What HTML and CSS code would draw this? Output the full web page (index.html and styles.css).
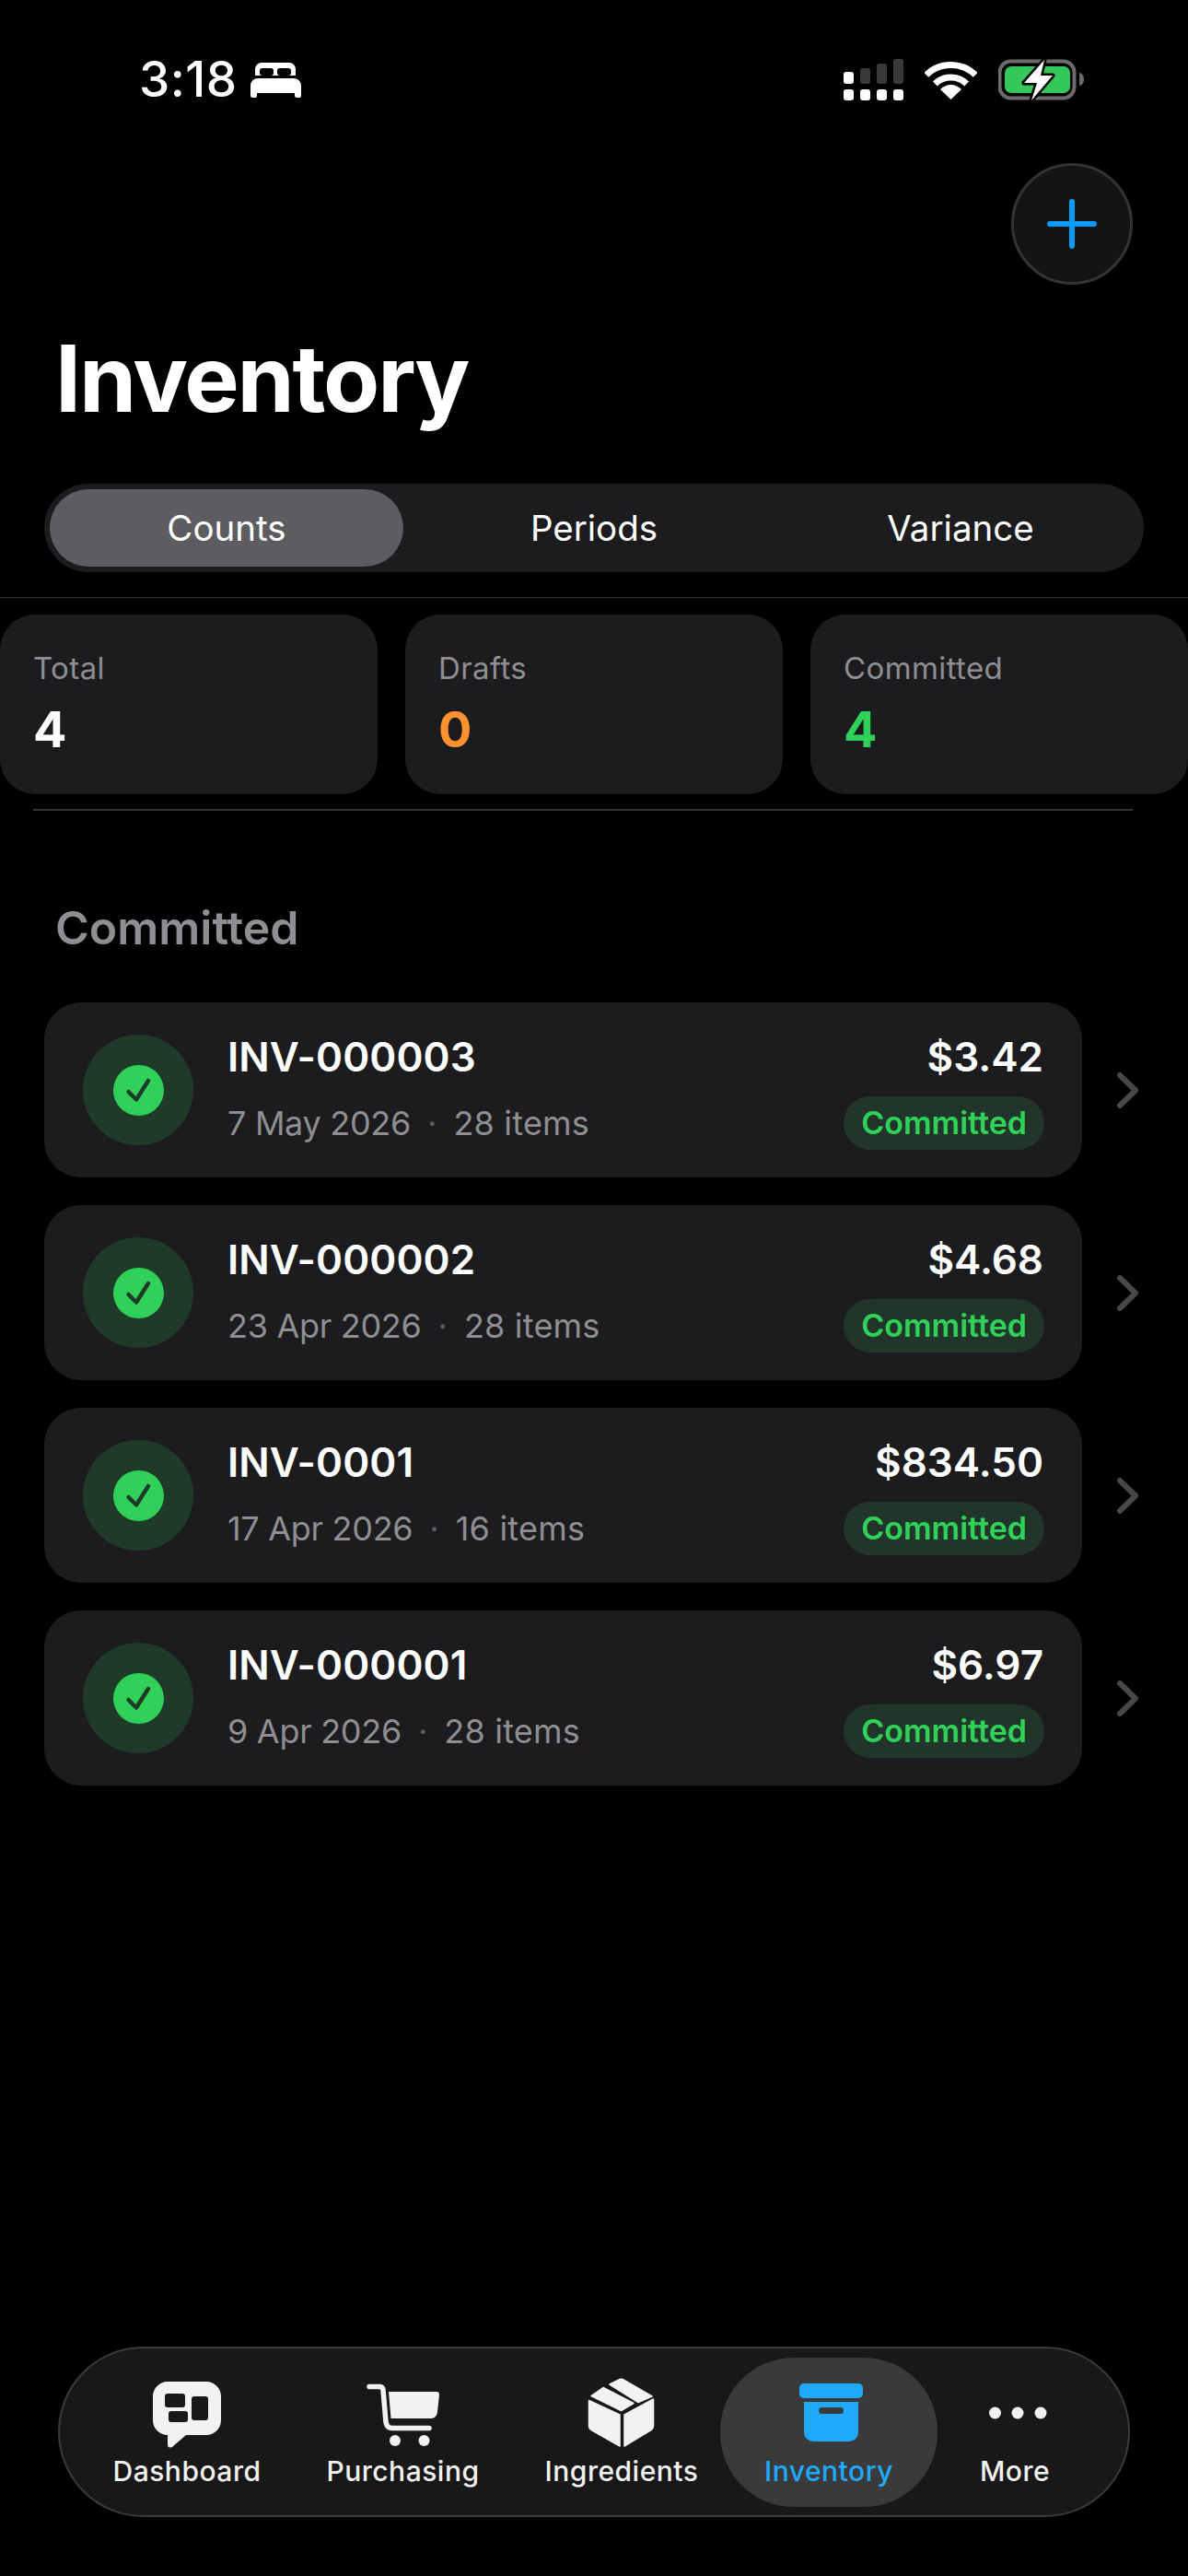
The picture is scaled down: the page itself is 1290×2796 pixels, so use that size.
FILE: index.html
```html
<!DOCTYPE html>
<html lang="en">
<head>
  <meta charset="UTF-8" />
  <meta name="viewport" content="width=device-width, initial-scale=1.0" />
  <title>Inventory</title>
  <link rel="stylesheet" href="styles.css">
</head>
<body>
  <div class="status-bar">
    <div class="status-left">
      <span class="time">3:18</span>
      <svg class="bed" width="55" height="38" viewBox="0 0 55 38">
        <path fill="#fff" d="M5 14V7a7 7 0 0 1 7-7h30a7 7 0 0 1 7 7v7z"/>
        <rect x="10" y="6" width="15" height="8" rx="3" fill="#000"/>
        <rect x="29" y="6" width="15" height="8" rx="3" fill="#000"/>
        <path fill="#fff" d="M0 25a8 8 0 0 1 8-8h39a8 8 0 0 1 8 8v11a2 2 0 0 1-2 2h-3a2 2 0 0 1-2-2v-3H7v3a2 2 0 0 1-2 2H2a2 2 0 0 1-2-2z"/>
      </svg>
    </div>
    <div class="status-right">
      <svg width="65" height="45" viewBox="0 0 65 45">
        <rect x="0" y="14" width="11" height="13" rx="3" fill="#fff"/>
        <rect x="18" y="10" width="11" height="17" rx="3" fill="#3a3a3a"/>
        <rect x="36" y="5" width="11" height="22" rx="3" fill="#3a3a3a"/>
        <rect x="54" y="0" width="11" height="27" rx="3" fill="#3a3a3a"/>
        <rect x="0" y="33" width="11" height="12" rx="3" fill="#fff"/>
        <rect x="18" y="33" width="11" height="12" rx="3" fill="#fff"/>
        <rect x="36" y="33" width="11" height="12" rx="3" fill="#fff"/>
        <rect x="54" y="33" width="11" height="12" rx="3" fill="#fff"/>
      </svg>
      <svg class="wifi" width="57" height="42" viewBox="0 0 57 42">
        <path d="M1.8 15.3A38.5 38.5 0 0 1 55.2 15.3" fill="none" stroke="#fff" stroke-width="7"/>
        <path d="M11.4 24.9A24.5 24.5 0 0 1 45.6 24.9" fill="none" stroke="#fff" stroke-width="7"/>
        <path d="M28.5 42L17 31A16 16 0 0 1 40 31z" fill="#fff"/>
      </svg>
      <svg class="battery" width="93" height="46" viewBox="0 0 93 46">
        <rect x="1.5" y="2.5" width="81" height="40" rx="12" fill="none" stroke="#6b6b6b" stroke-width="4"/>
        <rect x="7" y="8" width="71" height="29" rx="7" fill="#34c759"/>
        <path d="M88 15a5 7 0 0 1 5 7a5 7 0 0 1-5 7z" fill="#6b6b6b"/>
        <path d="M50 1L28 26H42L36 45L59 18H46z" fill="#fff" stroke="#000" stroke-width="5" stroke-linejoin="round" paint-order="stroke"/>
      </svg>
    </div>
  </div>

  <div class="top-actions">
    <button class="add-btn" type="button">
      <svg width="54" height="54" viewBox="0 0 54 54"><path d="M27 3V51M3 27H51" stroke="#0a9bff" stroke-width="6" stroke-linecap="round"/></svg>
    </button>
  </div>

  <h1 class="page-title">Inventory</h1>

  <div class="segments">
    <div class="segment active"><span>Counts</span></div>
    <div class="segment"><span>Periods</span></div>
    <div class="segment"><span>Variance</span></div>
  </div>

  <div class="rule"></div>

  <div class="stats">
    <div class="stat-card">
      <div class="stat-label">Total</div>
      <div class="stat-value">4</div>
    </div>
    <div class="stat-card">
      <div class="stat-label">Drafts</div>
      <div class="stat-value orange">0</div>
    </div>
    <div class="stat-card">
      <div class="stat-label">Committed</div>
      <div class="stat-value green">4</div>
    </div>
  </div>

  <div class="rule-short"></div>

  <h2 class="section-title">Committed</h2>

  <div class="count-list">
    <div class="count-row">
      <div class="count-card">
        <div class="status-icon"><span class="status-dot"><svg width="30" height="30" viewBox="0 0 30 30"><path d="M4.500 17L13 25.500L26 5" class="check"/></svg></span></div>
        <div class="count-info">
          <div class="count-name">INV-000003</div>
          <div class="count-meta"><span class="date">7 May 2026</span><span class="sep">·</span><span class="items">28 items</span></div>
        </div>
        <div class="count-side">
          <div class="count-amount">$3.42</div>
          <div class="pill">Committed</div>
        </div>
      </div>
      <svg class="chevron" width="25" height="39" viewBox="0 0 25 39"><path d="M4 3L21 19.500L4 36"/></svg>
    </div>

    <div class="count-row">
      <div class="count-card">
        <div class="status-icon"><span class="status-dot"><svg width="30" height="30" viewBox="0 0 30 30"><path d="M4.500 17L13 25.500L26 5" class="check"/></svg></span></div>
        <div class="count-info">
          <div class="count-name">INV-000002</div>
          <div class="count-meta"><span class="date">23 Apr 2026</span><span class="sep">·</span><span class="items">28 items</span></div>
        </div>
        <div class="count-side">
          <div class="count-amount">$4.68</div>
          <div class="pill">Committed</div>
        </div>
      </div>
      <svg class="chevron" width="25" height="39" viewBox="0 0 25 39"><path d="M4 3L21 19.500L4 36"/></svg>
    </div>

    <div class="count-row">
      <div class="count-card">
        <div class="status-icon"><span class="status-dot"><svg width="30" height="30" viewBox="0 0 30 30"><path d="M4.500 17L13 25.500L26 5" class="check"/></svg></span></div>
        <div class="count-info">
          <div class="count-name">INV-0001</div>
          <div class="count-meta"><span class="date">17 Apr 2026</span><span class="sep">·</span><span class="items">16 items</span></div>
        </div>
        <div class="count-side">
          <div class="count-amount">$834.50</div>
          <div class="pill">Committed</div>
        </div>
      </div>
      <svg class="chevron" width="25" height="39" viewBox="0 0 25 39"><path d="M4 3L21 19.500L4 36"/></svg>
    </div>

    <div class="count-row">
      <div class="count-card">
        <div class="status-icon"><span class="status-dot"><svg width="30" height="30" viewBox="0 0 30 30"><path d="M4.500 17L13 25.500L26 5" class="check"/></svg></span></div>
        <div class="count-info">
          <div class="count-name">INV-000001</div>
          <div class="count-meta"><span class="date">9 Apr 2026</span><span class="sep">·</span><span class="items">28 items</span></div>
        </div>
        <div class="count-side">
          <div class="count-amount">$6.97</div>
          <div class="pill">Committed</div>
        </div>
      </div>
      <svg class="chevron" width="25" height="39" viewBox="0 0 25 39"><path d="M4 3L21 19.500L4 36"/></svg>
    </div>
  </div>

  <nav class="tab-bar">
    <div class="tab tab-dashboard">
      <svg width="80" height="80" viewBox="0 0 80 80">
        <path fill="#f2f2f2" d="M19 5H61A16 16 0 0 1 77 21V47A16 16 0 0 1 61 63H39L24 76Q19 78 19 73V63A16 16 0 0 1 3 47V21A16 16 0 0 1 19 5z"/>
        <rect x="16" y="18" width="22" height="15" rx="3" fill="#181818"/>
        <rect x="20" y="37" width="21" height="12" rx="3" fill="#181818"/>
        <rect x="45" y="21" width="18" height="26" rx="3" fill="#181818"/>
      </svg>
      <span>Dashboard</span>
    </div>
    <div class="tab tab-purchasing">
      <svg width="80" height="80" viewBox="0 0 80 80">
        <path fill="none" stroke="#f2f2f2" stroke-width="5.500" stroke-linecap="round" stroke-linejoin="round" d="M3 10.500H14Q17.500 10.500 18 14L21 49Q22 55.500 28 55.500H68"/>
        <path fill="#f2f2f2" d="M24 16H76Q79 16 79 19L77 38Q76 45 70 45H26.500z"/>
        <circle cx="31" cy="69" r="6" fill="#f2f2f2"/>
        <circle cx="62.500" cy="69" r="6" fill="#f2f2f2"/>
      </svg>
      <span>Purchasing</span>
    </div>
    <div class="tab tab-ingredients">
      <svg width="80" height="80" viewBox="0 0 80 80">
        <g fill="#f2f2f2" stroke="#f2f2f2" stroke-width="1.500" stroke-linejoin="round">
          <path d="M27 8L38 2.500Q40 2 41 2.500L73 21L58 27.500z"/>
          <path d="M20 11.500L53 28.500L39.500 36.500L7 20.500z"/>
          <path d="M4.500 25.500L38 41V75L8 58Q4.500 56 4.500 53z"/>
          <path d="M43 41L74.500 24V53Q74.500 56 72 57.500L43 75z"/>
        </g>
      </svg>
      <span>Ingredients</span>
    </div>
    <div class="tab tab-inventory">
      <svg width="80" height="80" viewBox="0 0 80 80">
        <rect x="8" y="7" width="69" height="16" rx="5" fill="#1eaaff"/>
        <path fill="#1eaaff" d="M13 27H72V60A10 10 0 0 1 62 70H23A10 10 0 0 1 13 60z"/>
        <rect x="29" y="33" width="27" height="7" rx="3.500" fill="#3a3a3a"/>
      </svg>
      <span>Inventory</span>
    </div>
    <div class="tab tab-more">
      <svg width="80" height="80" viewBox="0 0 80 80">
        <circle cx="18.500" cy="39" r="6.500" fill="#f2f2f2"/>
        <circle cx="43" cy="39" r="6.500" fill="#f2f2f2"/>
        <circle cx="68" cy="39" r="6.500" fill="#f2f2f2"/>
      </svg>
      <span>More</span>
    </div>
  </nav>
</body>
</html>
```

FILE: styles.css
```css
* { box-sizing: border-box; }
body { margin: 0; width: 1290px; height: 2796px; position: relative; overflow: hidden; background: #000; color: #fff; font-family: Inter, "Noto Sans", sans-serif; }
svg { display: block; }

/* status bar */
.status-bar { display: flex; justify-content: space-between; align-items: center; height: 45px; margin-top: 64px; padding: 0 113px 0 151px; }
.status-left { display: flex; align-items: center; gap: 14px; }
.time { font-size: 53px; line-height: 45px; font-weight: 500; letter-spacing: .5px; }
.status-right { display: flex; align-items: center; }
.wifi { margin-left: 23px; }
.battery { margin-left: 23px; }

/* header */
.top-actions { display: flex; justify-content: flex-end; margin-top: 68px; padding-right: 60px; }
.add-btn { display: flex; align-items: center; justify-content: center; width: 132px; height: 132px; padding: 0; background: #141414; border: 3px solid #333; border-radius: 50%; }
.page-title { margin: 42px 0 0 60px; font-size: 100px; line-height: 120px; font-weight: 700; letter-spacing: -2.2px; }

/* segmented control */
.segments { display: grid; grid-template-columns: repeat(3, 1fr); height: 96px; margin: 54px 48px 0; background: #1c1c1e; border-radius: 48px; }
.segment { display: flex; align-items: center; justify-content: center; font-size: 38.5px; font-weight: 400; }
.segment.active { margin: 6px 8px 6px 6px; background: #5c5c61; border-radius: 42px; }

.rule { height: 1px; margin-top: 27px; background: #333; }

/* stat cards */
.stats { display: flex; gap: 30px; margin-top: 18px; }
.stat-card { width: 410px; height: 195px; padding: 38px 36px 0; background: #1c1c1e; border-radius: 38px; }
.stat-label { font-size: 33px; line-height: 40px; letter-spacing: .4px; color: #8e8e93; }
.stat-value { margin-top: 15px; font-size: 54px; line-height: 64px; font-weight: 700; }
.orange { color: #ff9230; }
.green { color: #30d158; }

.rule-short { height: 2px; margin: 16px 60px 0 36px; background: #333; }

.section-title { margin: 95px 0 0 60px; font-size: 50px; line-height: 64px; font-weight: 600; color: #8e8e93; }

/* list */
.count-list { display: flex; flex-direction: column; gap: 30px; margin: 49px 0 0 48px; }
.count-row { display: flex; align-items: center; }
.count-card { display: flex; align-items: flex-start; flex: none; width: 1127px; height: 190px; padding: 32px 41px 0 42px; background: #1c1c1e; border-radius: 40px; }
.status-icon { display: flex; align-items: center; justify-content: center; flex: none; width: 120px; height: 120px; margin-top: 3px; background: #1f3a29; border-radius: 50%; }
.status-dot { display: flex; align-items: center; justify-content: center; width: 55px; height: 55px; background: #30d158; border-radius: 50%; }
.check { fill: none; stroke: #1f3a29; stroke-width: 4.5; stroke-linecap: round; stroke-linejoin: round; }
.count-info { flex: 1; margin-left: 37px; }
.count-name { font-size: 44px; line-height: 54px; font-weight: 600; letter-spacing: .1px; }
.count-meta { display: flex; margin-top: 23px; font-size: 36px; line-height: 44px; color: #8e8e93; }
.date { letter-spacing: -.3px; }
.items { letter-spacing: .2px; }
.sep { margin: 0 18px; color: #5c5c5f; }
.count-side { display: flex; flex-direction: column; align-items: flex-end; }
.count-amount { margin-right: 1px; font-size: 44px; line-height: 54px; font-weight: 600; }
.pill { height: 58px; margin-top: 16px; padding: 0 19px; background: #21352a; border-radius: 29px; font-size: 34px; line-height: 58px; font-weight: 600; color: #30d158; }
.chevron { flex: none; margin-left: 37px; fill: none; stroke: #48484a; stroke-width: 6; stroke-linecap: round; stroke-linejoin: round; }

/* tab bar floats over the page bottom */
.tab-bar { position: absolute; left: 63px; top: 2547px; display: flex; width: 1164px; height: 185px; padding: 10px 22px 9px; background: #181818; border: 2px solid #3a3a3a; border-radius: 93px; }
.tab { display: flex; flex-direction: column; align-items: center; flex: none; height: 162px; padding-top: 21px; font-size: 30px; line-height: 36px; font-weight: 500; letter-spacing: .5px; color: #f2f2f2; }
.tab span { margin-top: 4px; white-space: nowrap; }
.tab-dashboard { width: 232px; }
.tab-purchasing { width: 237px; }
.tab-ingredients { width: 238px; }
.tab-inventory { width: 236px; margin-left: -12px; background: #3a3a3a; border-radius: 80px; color: #1eaaff; }
.tab-more { width: 168px; }
```
